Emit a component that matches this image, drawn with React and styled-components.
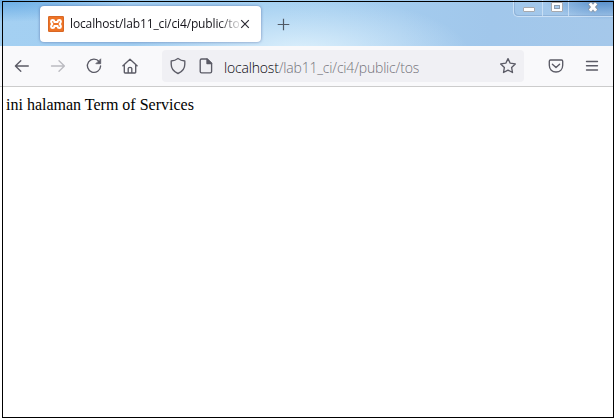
import React from "react";
import styled, { createGlobalStyle } from "styled-components";

const GlobalStyle = createGlobalStyle`
  * { box-sizing: border-box; }
  body { margin: 0; background: #fff; overflow: hidden; }
`;

const Window = styled.div`
  position: relative;
  display: flex;
  flex-direction: column;
  width: 614px;
  height: 419px;
  overflow: hidden;
  background: #fff;
`;

const Frame = styled.div`
  position: absolute;
  inset: 1px 0 1px 2px;
  border: 1px solid #000;
  pointer-events: none;
`;

const TabStrip = styled.header`
  display: flex;
  align-items: flex-start;
  height: 46px;
  padding: 6px 0 0 40px;
  background:
    radial-gradient(ellipse 60px 20px at 604px 0, rgba(70, 130, 195, 0.85), transparent),
    radial-gradient(ellipse 130px 22px at 0 0, rgba(85, 160, 225, 0.75), transparent),
    radial-gradient(ellipse 170px 58px at 300px 54px, rgba(226, 243, 253, 0.95), transparent),
    linear-gradient(90deg, #a4d0f2 0%, #a0cdf0 45%, #a3cbee 65%, #a1c7eb 80%, #a5c8ea 100%);
`;

const Tab = styled.div`
  display: flex;
  flex: none;
  align-items: center;
  width: 221px;
  height: 36px;
  padding-left: 8px;
  border-radius: 4px;
  background: #fff;
  box-shadow: 0 0 3px rgba(70, 90, 150, 0.7);
`;

const TabTitle = styled.span`
  width: 170px;
  margin-left: 6px;
  overflow: hidden;
  white-space: nowrap;
  color: #15141a;
  font: 12px/18px "Open Sans", "Noto Sans", sans-serif;
  letter-spacing: -0.13px;
  mask-image: linear-gradient(90deg, #000 148px, transparent 173px);
`;

const TabClose = styled.svg`
  display: block;
`;

const NewTab = styled.svg`
  display: block;
  flex: none;
  margin: 12px 0 0 16px;
`;

const Controls = styled.div`
  display: flex;
  width: 101px;
  height: 17px;
  margin: -6px 0 0 auto;
  border: 1px solid rgba(225, 239, 252, 0.65);
  border-width: 0 0 1px 1px;
  border-radius: 0 0 0 5px;
  box-shadow: inset 1px -1px 0 rgba(125, 160, 200, 0.5);
`;

const Control = styled.div`
  display: flex;
  justify-content: center;
  width: ${(p) => p.$width}px;
  padding-left: 2px;
  border-left: ${(p) => (p.$divided ? "1px solid rgba(225, 239, 252, 0.6)" : "0")};
  svg { display: block; flex: none; }
`;

const Toolbar = styled.nav`
  display: flex;
  align-items: center;
  height: 41px;
  padding-left: 13px;
  background: #f9f9fb;
  border-bottom: 1px solid #ccc;
`;

const Icon = styled.svg.attrs({ width: 18, height: 18, viewBox: "0 0 18 18" })`
  display: block;
  flex: none;
  margin-left: ${(p) => p.$gap || 0}px;
  fill: none;
  stroke: ${(p) => p.$color || "#5b5b66"};
  stroke-width: 1.35;
  stroke-linecap: round;
  stroke-linejoin: round;
`;

const AddressBar = styled.div`
  display: flex;
  flex: none;
  align-items: center;
  width: 362px;
  height: 32px;
  margin-left: 23px;
  padding: 0 7px;
  border-radius: 4px;
  background: #f0f0f4;
`;

const Url = styled.span`
  flex: 1;
  margin-left: 9px;
  padding-top: 3px;
  white-space: nowrap;
  color: #737279;
  font: 300 14px/20px "Open Sans", "Noto Sans", sans-serif;
  letter-spacing: -0.18px;
`;

const Host = styled.span`
  color: #08070c;
`;

const Page = styled.main`
  flex: 1;
  padding: 9px 6px;
  color: #000;
  font: 16px/18px "Liberation Serif", "Times New Roman", serif;
`;

const FaviconSvg = styled.svg`
  display: block;
  flex: none;
`;

const Favicon = () => (
  <FaviconSvg width="16" height="16" viewBox="0 0 16 16">
    <rect width="16" height="16" rx="1.2" fill="#d96724" />
    <rect x="1" y="1" width="14" height="14" rx="1" fill="#ee7426" />
    <path
      d="M6.4 5.4C6.2 3.6 3.2 3.6 3.1 5.4C3.1 6.8 3.8 7.2 4.3 8C3.8 8.8 3.1 9.2 3.1 10.6C3.2 12.4 6.2 12.4 6.4 10.6V10H9.6V10.6C9.8 12.4 12.8 12.4 12.9 10.6C12.9 9.2 12.2 8.8 11.7 8C12.2 7.2 12.9 6.8 12.9 5.4C12.8 3.6 9.8 3.6 9.6 5.4V6H6.4Z"
      fill="none" stroke="#fff" strokeWidth="2" strokeLinejoin="round"
    />
  </FaviconSvg>
);

export default function App() {
  return (
    <>
      <GlobalStyle />
      <Window>
        <TabStrip>
          <Tab>
            <Favicon />
            <TabTitle>localhost/lab11_ci/ci4/public/tos</TabTitle>
            <TabClose width="10" height="10" viewBox="0 0 10 10">
              <path d="M1.2 1.2L8.8 8.8M8.8 1.2L1.2 8.8" stroke="#2b2a33" strokeWidth="1.2" />
            </TabClose>
          </Tab>
          <NewTab width="13" height="13" viewBox="0 0 13 13">
            <path d="M6.5 .7V12.3M.7 6.5H12.3" stroke="#505964" strokeWidth="1.2" />
          </NewTab>
          <Controls>
            <Control $width={28}>
              <svg width="14" height="14"><rect x="1.5" y="7.5" width="11" height="4" rx=".5" fill="#fff" stroke="#a7a9ae" /></svg>
            </Control>
            <Control $width={27} $divided>
              <svg width="14" height="14">
                <rect x="1.5" y="2.5" width="11" height="9" rx=".5" fill="#fff" stroke="#a7a9ae" />
                <rect x="4.5" y="5.5" width="5" height="3" fill="#a9cbed" stroke="#8f9dae" />
              </svg>
            </Control>
            <Control $width={46} $divided>
              <svg width="14" height="14">
                <path d="M3.7 3.2L10.3 10.9M10.3 3.2L3.7 10.9" stroke="#8594a6" strokeWidth="5" />
                <path d="M3.9 3.4L10.1 10.7M10.1 3.4L3.9 10.7" stroke="#fff" strokeWidth="3" />
              </svg>
            </Control>
          </Controls>
        </TabStrip>
        <Toolbar>
          <Icon><path d="M15.3 9H2.6M7.8 3.7L2.4 9L7.8 14.3" /></Icon>
          <Icon $gap={18} $color="#bbbbc1"><path d="M2.5 9H15.2M10 3.7L15.4 9L10 14.3" /></Icon>
          <Icon $gap={18}>
            <path d="M14.2 4.7A6.6 6.6 0 1 0 15.6 9" />
            <path d="M15.7 2.2V6.7H11.2Z" fill="#5b5b66" strokeWidth=".8" />
          </Icon>
          <Icon $gap={18}>
            <path d="M1.9 8.7L9 2.2L16.1 8.7M3.3 7.5V15.2Q3.3 16 4.1 16H13.9Q14.7 16 14.7 15.2V7.5M7.2 16V11.5Q7.2 10.3 9 10.3T10.8 11.5V16" />
          </Icon>
          <AddressBar>
            <Icon><path d="M9 1.5C11 3 13.2 3.8 15.8 4V7.3C15.8 12 12.8 15 9 16.5C5.2 15 2.2 12 2.2 7.3V4C4.8 3.8 7 3 9 1.5Z" /></Icon>
            <Icon $gap={10}>
              <path d="M4.6 2H10L14.6 6.6V14.4Q14.6 15.8 13.2 15.8H4.6Q3.2 15.8 3.2 14.4V3.4Q3.2 2 4.6 2Z" />
              <path d="M10 2V6.6H14.6Z" fill="#5b5b66" />
            </Icon>
            <Url><Host>localhost</Host>/lab11_ci/ci4/public/tos</Url>
            <Icon><path d="M9 1.6L11.2 6.2L16.3 6.9L12.6 10.4L13.5 15.5L9 13.1L4.5 15.5L5.4 10.4L1.7 6.9L6.8 6.2Z" /></Icon>
          </AddressBar>
          <Icon $gap={23}>
            <path d="M3.5 3H14.5Q15.7 3 15.7 4.2V8.2C15.7 12.4 12.8 15 9 15S2.3 12.4 2.3 8.2V4.2Q2.3 3 3.5 3ZM5.4 7.2L9 10.6L12.6 7.2" />
          </Icon>
          <Icon $gap={18}><path d="M3.5 4.5H14.5M3.5 8.7H14.5M3.5 13H14.5" /></Icon>
        </Toolbar>
        <Page>ini halaman Term of Services</Page>
        <Frame />
      </Window>
    </>
  );
}
